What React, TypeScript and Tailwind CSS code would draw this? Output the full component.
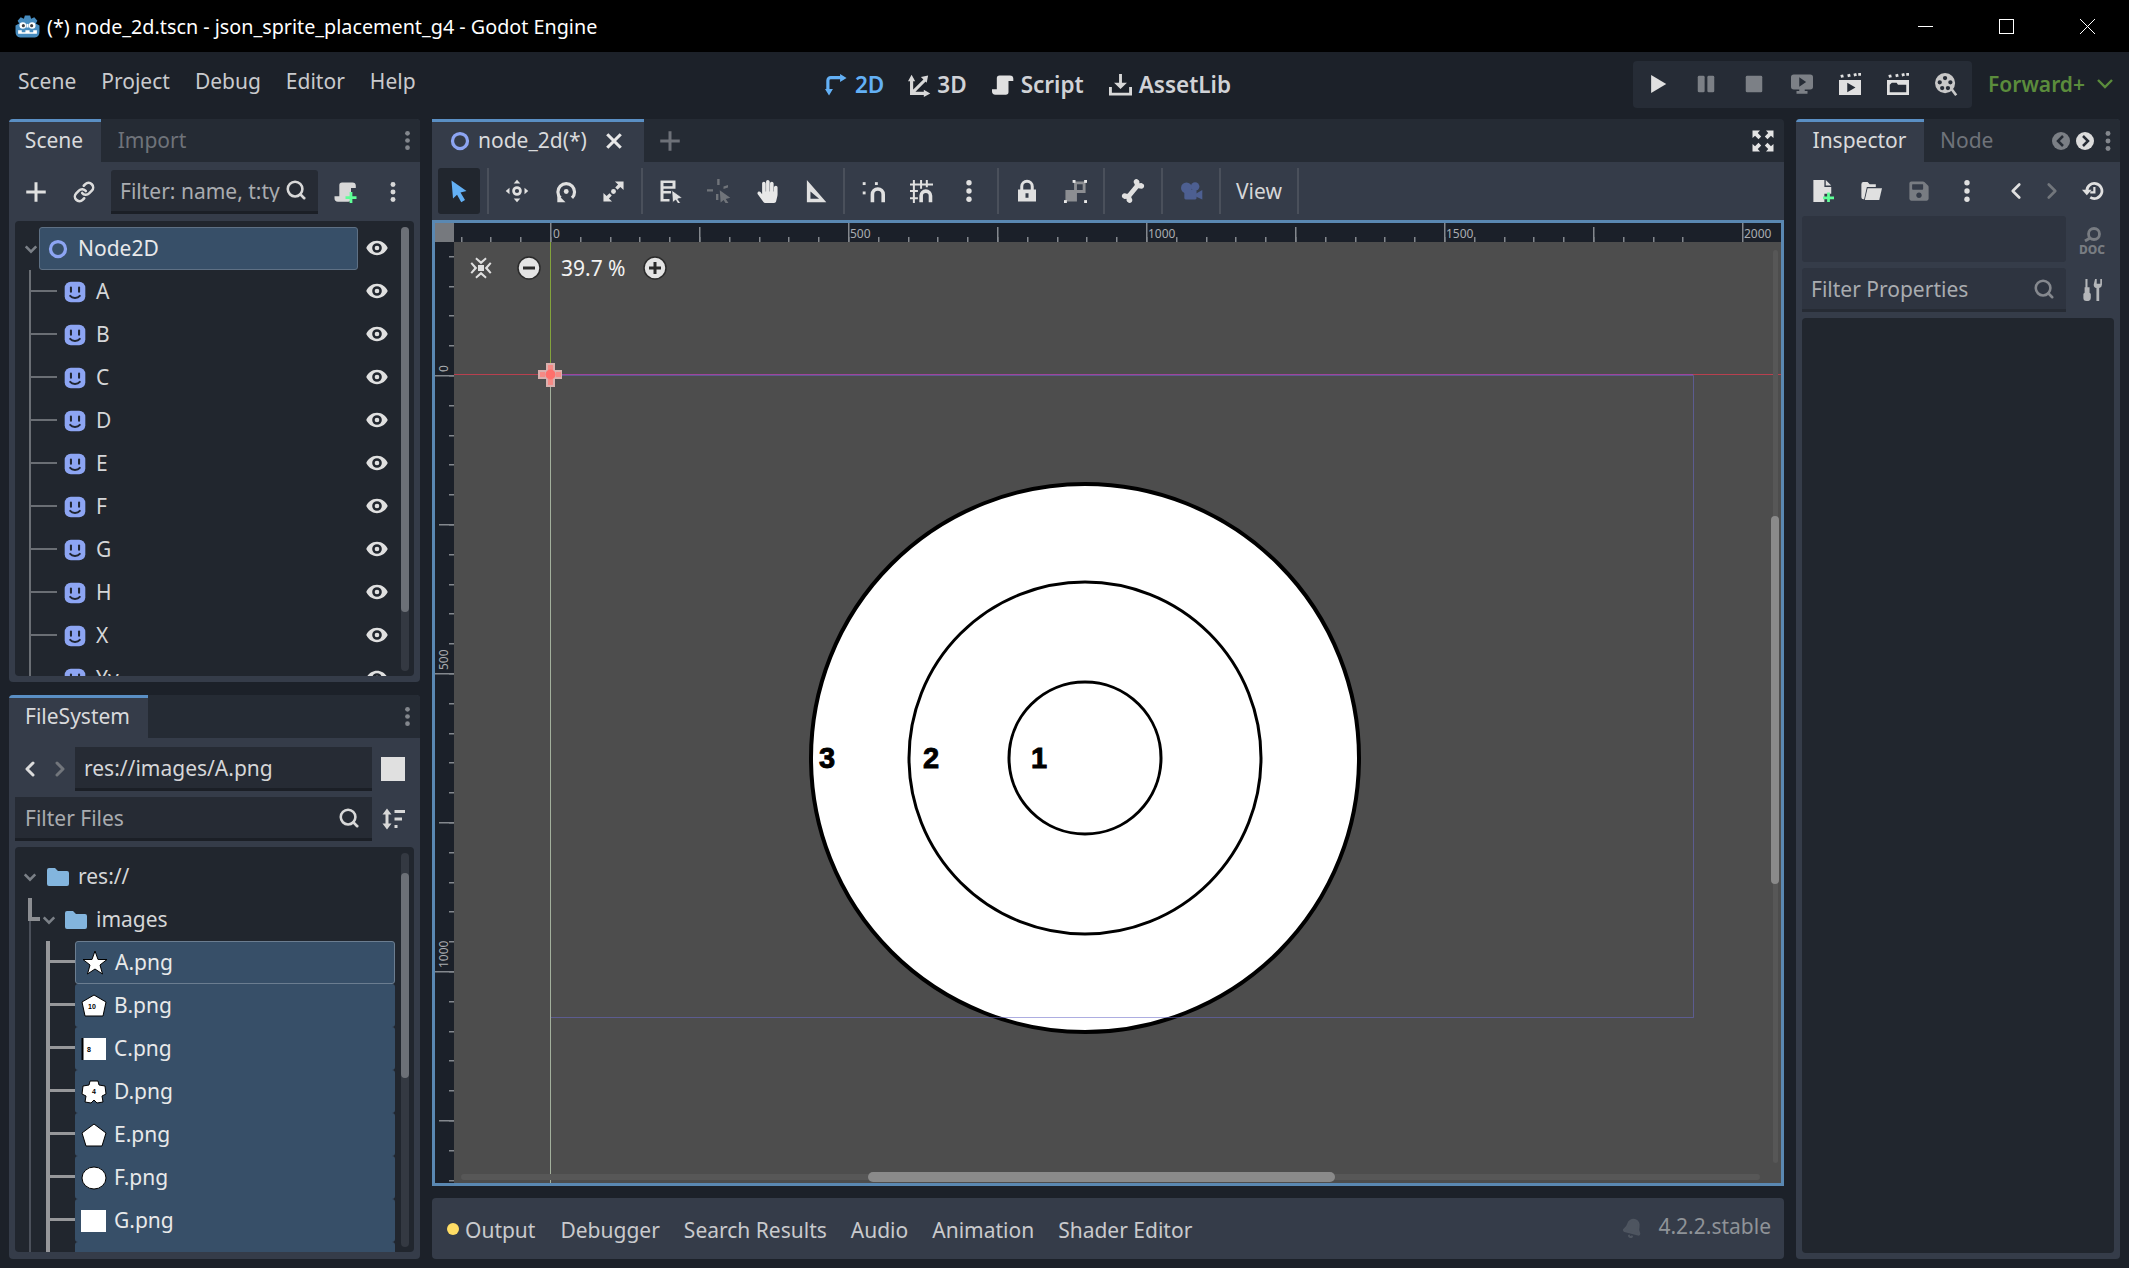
import type { ReactNode } from "react";
import { Bell, ChevronLeft, ChevronRight, Link, Search } from "lucide-react";
import { FaBone, FaHandPaper, FaSave } from "react-icons/fa";

function Ico({ size = 21, className = "text-[#e0e0e0]", children }: { size?: number; className?: string; children: ReactNode }) {
  return (
    <svg width={size} height={size} viewBox="0 0 16 16" fill="currentColor" className={"shrink-0 " + className}>
      {children}
    </svg>
  );
}

function Dots({ size = 21, className = "text-[#d8d8d8]" }: { size?: number; className?: string }) {
  return (
    <Ico size={size} className={className}>
      <circle cx="8" cy="2.5" r="1.8" />
      <circle cx="8" cy="8" r="1.8" />
      <circle cx="8" cy="13.5" r="1.8" />
    </Ico>
  );
}

function Eye() {
  return (
    <Ico size={22} className="-translate-y-[1px] text-[#e0e0e0]">
      <path
        fillRule="evenodd"
        d="M8 2.8C4.2 2.8 1.3 5.4.2 8c1.1 2.6 4 5.2 7.8 5.2s6.700-2.600 7.800-5.200C14.700 5.400 11.800 2.800 8 2.800zM8 4.500a3.500 3.500 0 1 1 0 7 3.500 3.500 0 0 1 0-7zM8 6.300a1.700 1.700 0 1 0 0 3.400 1.700 1.700 0 0 0 0-3.400z"
      />
    </Ico>
  );
}

function SpriteIcon() {
  return (
    <svg width={22} height={22} viewBox="0 0 16 16" className="shrink-0">
      <rect x="0.5" y="0.5" width="15" height="15" rx="4.500" fill="#8da5f3" />
      <rect x="4.300" y="4" width="1.500" height="4.500" rx="0.750" fill="#1f2530" />
      <rect x="10.200" y="4" width="1.500" height="4.500" rx="0.750" fill="#1f2530" />
      <path d="M4.500 10.800c1.500 2 5.500 2 7 0" fill="none" stroke="#1f2530" strokeWidth="1.400" strokeLinecap="round" />
    </svg>
  );
}

function NodeRing({ size = 20 }: { size?: number }) {
  return (
    <svg width={size} height={size} viewBox="0 0 16 16" className="shrink-0">
      <circle cx="8" cy="8" r="6" fill="none" stroke="#8da5f3" strokeWidth="2.600" />
    </svg>
  );
}

function ChevDown() {
  return (
    <svg width={14} height={14} viewBox="0 0 16 16" className="shrink-0">
      <path d="M2 5l6 6 6-6" fill="none" stroke="#7b8087" strokeWidth="3" />
    </svg>
  );
}

function Folder() {
  return (
    <svg width={23} height={20} viewBox="0 0 23 20" className="shrink-0">
      <path d="M1 3a2 2 0 0 1 2-2h6l3 3h9a2 2 0 0 1 2 2v11a2 2 0 0 1-2 2H3a2 2 0 0 1-2-2z" fill="#83b5de" />
    </svg>
  );
}

function GodotLogo() {
  return (
    <svg width={25} height={25} viewBox="0 0 24 24" className="shrink-0">
      <path
        d="M9.500 1.500L14.500 1.500L15.500 4.500L18.500 3L21.500 6.500L20 9L23.500 11L23.500 17Q23.500 22 19 22.500L5 22.500Q.5 22 .5 17L.5 11L4 9L2.500 6.500L5.500 3L8.500 4.500Z"
        fill="#478cbf"
      />
      <path d="M3 15.500h3.500v2h3.500v-2h4v2h3.500v-2H21v3.500H3z" fill="#fff" />
      <circle cx="7.500" cy="11" r="3.200" fill="#fff" />
      <circle cx="16.500" cy="11" r="3.200" fill="#fff" />
      <circle cx="8" cy="11.200" r="1.500" fill="#414042" />
      <circle cx="16" cy="11.200" r="1.500" fill="#414042" />
      <rect x="11" y="9.500" width="2" height="3.500" fill="#fff" />
    </svg>
  );
}

function ScrollIcon({ size = 21, className = "text-[#e0e0e0]" }: { size?: number; className?: string }) {
  return (
    <Ico size={size} className={className}>
      <path d="M5.500 1H13a2.500 2.500 0 0 1 2.500 2.500V5H12v8a2 2 0 0 1-2 2H2.500A2.500 2.500 0 0 1 0 12.500V11h3.500V3A2 2 0 0 1 5.500 1z" />
    </Ico>
  );
}

const sceneNodes = ["A", "B", "C", "D", "E", "F", "G", "H", "X", "Yy"];

function SceneDock() {
  return (
    <div className="flex h-[563px] flex-col overflow-hidden rounded-t-[4px] rounded-b-[4px] bg-[#353c49]">
      <div className="flex h-[43px] shrink-0 items-stretch bg-[#252b34]">
        <div className="flex w-[92px] items-center justify-center border-t-[3px] border-[#5a8fc4] bg-[#353c49] pb-[3px] pr-[2px] text-[#d9dadc]">Scene</div>
        <div className="flex w-[102px] items-center justify-center pb-[1px] text-[#6f737a]">Import</div>
        <div className="ml-auto flex items-center pr-[2px]">
          <Dots size={21} className="text-[#83878d]" />
        </div>
      </div>
      <div className="flex h-[59px] shrink-0 items-center">
        <div className="flex w-[54px] justify-start pl-[15px]">
          <svg width={24} height={24} viewBox="0 0 16 16" fill="#e0e0e0">
            <path d="M7 1.500h2V7h5.500v2H9v5.500H7V9H1.500V7H7z" />
          </svg>
        </div>
        <div className="flex w-[42px] justify-center">
          <Link size={22} strokeWidth={2.800} className="text-[#dcdcdc]" />
        </div>
        <div className="ml-[6px] flex h-[44px] w-[207px] items-center rounded-t-[3px] border-b-[3px] border-[#1b1f26] bg-[#262b34] pl-[9px] pr-[11px]">
          <span className="flex-1 translate-y-[1px] overflow-hidden whitespace-nowrap text-[#a9acb0]">Filter: name, t:ty</span>
          <Search size={22} strokeWidth={2.800} className="shrink-0 text-[#d8d8d8]" />
        </div>
        <div className="ml-[15px] flex w-[24px] justify-center">
          <svg width={23} height={22} viewBox="0 0 16 16">
            <path d="M5.500 1H13a2.500 2.500 0 0 1 2.500 2.500V5H12v8a2 2 0 0 1-2 2H2.500A2.500 2.500 0 0 1 0 12.500V11h3.500V3A2 2 0 0 1 5.500 1z" fill="#d8d8d8" />
            <path d="M11 8h2v3h3v2h-3v3h-2v-3H8v-2h3z" fill="#5fff97" />
          </svg>
        </div>
        <div className="ml-[25px]">
          <Dots size={22} />
        </div>
      </div>
      <div className="mx-[6px] flex h-[455px] shrink-0 overflow-hidden rounded-[4px] bg-[#21262e] pt-[6px]">
        <div className="w-[386px] shrink-0">
          <div className="flex h-[43px] items-center">
            <div className="flex w-[24px] justify-end pr-[1px]">
              <ChevDown />
            </div>
            <div className="flex h-[43px] w-[319px] items-center gap-[10px] rounded-[3px] border border-[#5e7084] bg-[#374f68] pl-[8px] text-[#e8e9ea]">
              <NodeRing size={20} />
              Node2D
            </div>
            <div className="ml-[8px]">
              <Eye />
            </div>
          </div>
          {sceneNodes.map((name) => (
            <div key={name} className="flex h-[43px] items-center">
              <div className="ml-[14px] h-full w-[28px] shrink-0 border-l-2 border-[#6a6e74]">
                <div className="h-[22px] border-b-2 border-[#6a6e74]" />
              </div>
              <div className="ml-[7px]">
                <SpriteIcon />
              </div>
              <div className="ml-[10px] w-[270px] text-[#d5d6d8]">{name}</div>
              <Eye />
            </div>
          ))}
        </div>
        <div className="ml-[0px] h-[444px] w-[8px] shrink-0 rounded-[4px] bg-[#343942]">
          <div className="h-[385px] rounded-[4px] bg-[#6c7077]" />
        </div>
      </div>
    </div>
  );
}

function Thumb({ children }: { children: ReactNode }) {
  return (
    <svg width={26} height={26} viewBox="0 0 26 26" className="shrink-0">
      {children}
    </svg>
  );
}

const thumbText = { fill: "#000", fontSize: 7, fontWeight: 700, fontFamily: "'Liberation Sans',sans-serif", textAnchor: "middle" as const };

const files: { name: string; thumb: ReactNode }[] = [
  {
    name: "A.png",
    thumb: (
      <Thumb>
        <polygon points="13,1 16,9.500 25,9.500 18,15 20.500,24 13,19 5.500,24 8,15 1,9.500 10,9.500" fill="#fff" stroke="#000" />
      </Thumb>
    ),
  },
  {
    name: "B.png",
    thumb: (
      <Thumb>
        <polygon points="13,2 25,9 22,23 4,23 1,9" fill="#fff" stroke="#000" />
        <text x="11" y="16" {...thumbText}>10</text>
      </Thumb>
    ),
  },
  {
    name: "C.png",
    thumb: (
      <Thumb>
        <rect x="1" y="2" width="24" height="22" fill="#fff" />
        <rect x="0.500" y="2" width="2" height="22" fill="#000" />
        <text x="8" y="16" {...thumbText}>8</text>
      </Thumb>
    ),
  },
  {
    name: "D.png",
    thumb: (
      <Thumb>
        <path d="M9 2h8l1 4 6 1 1 8-4 2 1 6-6 1-3-3-3 3-6-1 1-6-4-2 1-8 6-1z" fill="#fff" stroke="#000" />
        <text x="13" y="15" {...thumbText}>4</text>
      </Thumb>
    ),
  },
  {
    name: "E.png",
    thumb: (
      <Thumb>
        <polygon points="13,2 25,11 21,24 5,24 1,11" fill="#fff" stroke="#000" />
      </Thumb>
    ),
  },
  {
    name: "F.png",
    thumb: (
      <Thumb>
        <ellipse cx="13" cy="13" rx="12" ry="11" fill="#fff" stroke="#000" />
      </Thumb>
    ),
  },
  {
    name: "G.png",
    thumb: (
      <Thumb>
        <rect x="0" y="2" width="25" height="22" fill="#fff" />
      </Thumb>
    ),
  },
  {
    name: "H.png",
    thumb: (
      <Thumb>
        <polygon points="13,2 25,24 1,24" fill="#fff" stroke="#000" />
      </Thumb>
    ),
  },
];

function FileSystemDock() {
  return (
    <div className="flex h-[564px] flex-col overflow-hidden rounded-[4px] bg-[#353c49]">
      <div className="flex h-[43px] shrink-0 items-stretch bg-[#252b34]">
        <div className="flex w-[139px] items-center justify-center border-t-[3px] border-[#5a8fc4] bg-[#353c49] pb-[3px] pr-[2px] text-[#d9dadc]">FileSystem</div>
        <div className="ml-auto flex items-center pr-[2px]">
          <Dots size={21} className="text-[#83878d]" />
        </div>
      </div>
      <div className="mt-[9px] flex h-[44px] shrink-0 items-center">
        <div className="flex w-[66px] shrink-0 items-center pl-[9px]">
          <ChevronLeft size={24} strokeWidth={3} className="text-[#dcdcdc]" />
          <ChevronRight size={24} strokeWidth={3} className="ml-[6px] text-[#72767c]" />
        </div>
        <div className="flex h-[44px] w-[297px] items-center border-b-[3px] border-[#1b1f26] bg-[#262b34] pl-[9px] pt-[1px] text-[#d5d6d8]">res://images/A.png</div>
        <div className="ml-[9px] h-[24px] w-[24px] bg-[#e0e0e0]" />
      </div>
      <div className="mt-[6px] flex h-[44px] shrink-0 items-center pl-[6px]">
        <div className="flex h-[44px] w-[357px] items-center border-b-[3px] border-[#1b1f26] bg-[#262b34] pl-[10px] pr-[12px]">
          <span className="flex-1 translate-y-[1px] text-[#a9acb0]">Filter Files</span>
          <Search size={22} strokeWidth={2.800} className="text-[#d8d8d8]" />
        </div>
        <div className="ml-[9px]">
          <svg width={24} height={24} viewBox="0 0 16 16" fill="#d8d8d8">
            <path d="M4 1l3 4H5v6h2l-3 4-3-4h2V5H1z" />
            <rect x="9" y="2" width="7" height="2" />
            <rect x="9" y="7" width="5" height="2" />
            <rect x="9" y="12" width="2" height="2" />
          </svg>
        </div>
      </div>
      <div className="mx-[6px] mt-[6px] flex h-[405px] shrink-0 overflow-hidden rounded-[4px] bg-[#21262e] pt-[8px]">
        <div className="w-[386px] shrink-0">
          <div className="flex h-[43px] items-center pl-[8px] text-[#d5d6d8]">
            <ChevDown />
            <div className="ml-[9px]">
              <Folder />
            </div>
            <span className="ml-[9px]">res://</span>
          </div>
          <div className="flex h-[43px] items-center text-[#d5d6d8]">
            <div className="ml-[13px] h-[43px] w-[12px] shrink-0">
              <div className="h-[23px] border-b-4 border-l-4 border-[#8c8e92]" />
              <div className="ml-[1px] h-[20px] w-[2px] bg-[#4b505a]" />
            </div>
            <div className="ml-[2px]">
              <ChevDown />
            </div>
            <div className="ml-[8px]">
              <Folder />
            </div>
            <span className="ml-[9px]">images</span>
          </div>
          {files.map((f, i) => (
            <div key={f.name} className="flex h-[43px]">
              <div className="ml-[14px] h-full w-[2px] shrink-0 bg-[#4b505a]" />
              <div className="ml-[15px] h-full w-[29px] shrink-0 border-l-4 border-[#96979a]">
                <div className="h-[22px] border-b-[3px] border-[#96979a]" />
              </div>
              <div
                className={
                  "flex h-[43px] w-[320px] items-center gap-[7px] rounded-[3px] bg-[#374f68] pl-[6px] text-[#e8e9ea]" +
                  (i === 0 ? " border border-[#6b7d90]" : "")
                }
              >
                {f.thumb}
                {f.name}
              </div>
            </div>
          ))}
        </div>
        <div className="ml-[0px] h-[394px] w-[8px] shrink-0 -translate-y-[2px] rounded-[4px] bg-[#343942] pt-[20px]">
          <div className="h-[205px] rounded-[4px] bg-[#6c7077]" />
        </div>
      </div>
    </div>
  );
}

function ToolBtn({ children, active }: { children: ReactNode; active?: boolean }) {
  return (
    <div className="flex h-[46px] w-[48px] shrink-0 items-center justify-center">
      {active ? (
        <div className="flex h-[46px] w-[42px] items-center justify-center rounded-[3px] bg-[#21262e]">{children}</div>
      ) : (
        children
      )}
    </div>
  );
}

function Sep() {
  return <div className="mx-[4px] h-[46px] w-[2px] shrink-0 bg-[#4a505b]" />;
}

const cursorPath = "M8.500 7.500l7 5-3 .8 1.800 2.700-1.500.8-1.700-2.800-2 1.700z";

function ViewportToolbar() {
  return (
    <div className="flex h-[58px] shrink-0 items-start bg-[#353c49] pl-[3px] pt-[6px]">
      <ToolBtn active>
        <Ico size={24} className="text-[#63b0f5]">
          <path d="M3 1l10 7-4 1 3 5-2.500 1.500-2.800-5L4 13z" />
        </Ico>
      </ToolBtn>
      <Sep />
      <ToolBtn>
        <Ico size={24}>
          <path d="M8 .5l2.200 2.500H5.800zM8 15.500L5.800 13h4.400zM.5 8L3 5.800v4.400zM15.500 8L13 10.200V5.800z" />
          <circle cx="8" cy="8" r="2.300" fill="none" stroke="currentColor" strokeWidth="1.800" />
        </Ico>
      </ToolBtn>
      <ToolBtn>
        <Ico size={23}>
          <path d="M4.500 12.500A5.800 5.800 0 1 1 12.500 12.500" fill="none" stroke="currentColor" strokeWidth="2.200" />
          <path d="M2.300 15.500V9.800l5.700 5.700z" />
          <circle cx="8.500" cy="8" r="1.700" />
        </Ico>
      </ToolBtn>
      <ToolBtn>
        <Ico size={23}>
          <path d="M9 1h6v6l-2.200-2.200-2 2-1.600-1.600 2-2zM7 15H1V9l2.200 2.200 2-2 1.600 1.600-2 2z" />
          <circle cx="8" cy="8" r="1.700" />
        </Ico>
      </ToolBtn>
      <Sep />
      <ToolBtn>
        <Ico size={24}>
          <path d="M1 1h10v5.500H3V8h5v1.700H3v3.600h4V15H1zM3 2.700v2.100h6V2.700z" fillRule="evenodd" />
          <path d={cursorPath} stroke="#353c49" strokeWidth="0.500" />
        </Ico>
      </ToolBtn>
      <ToolBtn>
        <Ico size={24} className="text-[#70747a]">
          <path d="M6.800 0h1.600v4H6.800zM0 6.800h4v1.600H0zM11 5l3-1v1.600l-3 1zM6 10h1.600v4H6z" />
          <path d={cursorPath} />
        </Ico>
      </ToolBtn>
      <ToolBtn>
        <FaHandPaper size={23} className="text-[#e8e8e8]" />
      </ToolBtn>
      <ToolBtn>
        <Ico size={23}>
          <path fillRule="evenodd" d="M2 0l13.500 15.500H2zM4.500 8v5h6z" />
        </Ico>
      </ToolBtn>
      <Sep />
      <ToolBtn>
        <Ico size={23}>
          <path d="M6 15.500V10a5 5 0 0 1 10 0v5.500h-2.500V10a2.500 2.500 0 0 0-5 0v5.500z" />
          <rect x="0.500" y="1.500" width="2" height="2" />
          <rect x="0.500" y="8" width="2" height="2" />
          <rect x="9" y="1.500" width="2" height="2" />
        </Ico>
      </ToolBtn>
      <ToolBtn>
        <Ico size={23}>
          <path d="M2 0h1.400v16H2zM7 0h1.400v6H7zM11 0h1.400v5H11zM0 2.500h16v1.400H0zM0 7h5.500v1.400H0zM0 12h5.500v1.400H0z" />
          <path d="M6.500 15.500V11a4.500 4.500 0 0 1 9 0v4.500h-2.500V11a2 2 0 0 0-4 0v4.500z" />
        </Ico>
      </ToolBtn>
      <ToolBtn>
        <Dots size={24} className="text-[#e0e0e0]" />
      </ToolBtn>
      <Sep />
      <ToolBtn>
        <Ico size={24}>
          <path d="M4.500 7.500V5a3.500 3.500 0 0 1 7 0v2.500" fill="none" stroke="currentColor" strokeWidth="2" />
          <path fillRule="evenodd" d="M2 7h12v8H2zM7 9.500v3h2v-3z" />
        </Ico>
      </ToolBtn>
      <ToolBtn>
        <Ico size={23} className="text-[#8c8e92]">
          <path fillRule="evenodd" d="M7 1h8v8H9v6H1V7h6zM9 3v4h4V3z" />
          <rect x="0" y="0" width="2" height="2" fill="#e8e8e8" transform="translate(6 0)" />
          <rect x="14" y="0" width="2" height="2" fill="#e8e8e8" />
          <rect x="0" y="14" width="2" height="2" fill="#e8e8e8" />
          <rect x="14" y="14" width="2" height="2" fill="#e8e8e8" />
        </Ico>
      </ToolBtn>
      <Sep />
      <ToolBtn>
        <FaBone size={24} className="-rotate-[50deg] text-[#e0e0e0]" />
      </ToolBtn>
      <Sep />
      <ToolBtn>
        <Ico size={23} className="text-[#4d5f91]">
          <circle cx="4.500" cy="5.500" r="3.800" />
          <circle cx="10.500" cy="4.500" r="3" />
          <rect x="3" y="7" width="8.500" height="6.500" rx="1" />
          <path d="M11 9.500l4.500-2.500v6.500L11 11.500z" />
        </Ico>
      </ToolBtn>
      <Sep />
      <div className="flex h-[46px] w-[68px] shrink-0 items-center justify-center text-[#d5d6d8]">View</div>
      <Sep />
    </div>
  );
}

const P = 298;
const ticksX = Array.from({ length: 42 }, (_, i) => 550 + ((i - 3) * P) / 10).filter((x) => x > 455 && x < 1781);
const ticksY = Array.from({ length: 34 }, (_, i) => 375 + ((i - 4) * P) / 10).filter((y) => y > 243 && y < 1183);

function Canvas() {
  return (
    <svg width={1346} height={960} viewBox="435 223 1346 960" className="block">
      <rect x="435" y="223" width="1346" height="960" fill="#4d4d4d" />
      <circle cx="1085" cy="758" r="274" fill="#fff" stroke="#000" strokeWidth="4" />
      <circle cx="1085" cy="758" r="176" fill="none" stroke="#000" strokeWidth="3" />
      <circle cx="1085" cy="758" r="76" fill="none" stroke="#000" strokeWidth="3" />
      <g fontFamily="'Liberation Sans',sans-serif" fontWeight="700" fontSize="29" fill="#000" stroke="#000" strokeWidth="0.900" textAnchor="middle">
        <text x="827" y="768">3</text>
        <text x="931" y="768">2</text>
        <text x="1039" y="768">1</text>
      </g>
      <path d="M550.500 375.500H1693.500V1017.500H550.500z" fill="none" stroke="#6a6ac8" strokeOpacity="0.550" strokeWidth="1" />
      <path d="M454 374.500H550" stroke="#b8404f" strokeWidth="1" />
      <path d="M550 374.500H1693" stroke="#a0449a" strokeWidth="1" />
      <path d="M1693 374.500H1781" stroke="#b8404f" strokeWidth="1" />
      <path d="M550.500 242V374" stroke="#83a33c" strokeWidth="1" />
      <path d="M550.500 374V1183" stroke="#a3b09c" strokeWidth="1" />
      <path d="M546 363h9v7h7v9h-7v8h-9v-8h-8v-9h8z" fill="#d9b0ae" />
      <path d="M548 365h5v5h-5zM548 379h5v6h-5zM540 372h5v5h-5zM556 372h5v5h-5z" fill="#f58a85" />
      <circle cx="550.500" cy="374.500" r="5" fill="#ff6f6b" />

      <rect x="454" y="223" width="1327" height="19" fill="#1b2029" />
      <rect x="435" y="242" width="19" height="941" fill="#1b2029" />
      <rect x="435" y="223" width="19" height="19" fill="#76797e" />
      {ticksX.map((x) => (
        <rect key={x} x={Math.round(x)} y="237" width="1.500" height="5" fill="#83878d" />
      ))}
      {[550, 848, 1146, 1444, 1742].map((x) => (
        <rect key={x} x={x} y="223" width="1.500" height="19" fill="#83878d" />
      ))}
      {[699, 997, 1295, 1593].map((x) => (
        <rect key={x} x={x} y="227" width="1.500" height="15" fill="#83878d" />
      ))}
      {ticksY.map((y) => (
        <rect key={y} x="449" y={Math.round(y)} width="5" height="1.500" fill="#83878d" />
      ))}
      {[375, 673, 971].map((y) => (
        <rect key={y} x="435" y={y} width="19" height="1.500" fill="#83878d" />
      ))}
      {[524, 822, 1120].map((y) => (
        <rect key={y} x="439" y={y} width="15" height="1.500" fill="#83878d" />
      ))}
      <g fontFamily="'Noto Sans',sans-serif" fontSize="12" fill="#a9acb0">
        <text x="553" y="238">0</text>
        <text x="850" y="238">500</text>
        <text x="1148" y="238">1000</text>
        <text x="1446" y="238">1500</text>
        <text x="1744" y="238">2000</text>
        <text transform="translate(448 372) rotate(-90)">0</text>
        <text transform="translate(448 670) rotate(-90)">500</text>
        <text transform="translate(448 968) rotate(-90)">1000</text>
      </g>
    </svg>
  );
}

function ZoomOverlay() {
  return (
    <div className="absolute left-[34px] top-[29px] flex h-[32px] items-center text-[#f2f2f2]">
      <svg width={24} height={24} viewBox="0 0 16 16" fill="#e0e0e0">
        <rect x="6" y="6" width="4" height="4" />
        <path d="M5 1l3 2.500L11 1l.8 1L8 5.500 4.200 2zM5 15l3-2.500 3 2.500.8-1L8 10.500 4.200 14zM1 5l2.500 3L1 11l1 .8L5.500 8 2 4.200zM15 5l-2.500 3 2.500 3-1 .8L10.500 8 14 4.200z" />
      </svg>
      <svg width={24} height={24} viewBox="0 0 24 24" className="ml-[24px]">
        <circle cx="12" cy="12" r="11" fill="#e4e4e4" stroke="#2b2b2b" strokeWidth="1.500" />
        <rect x="6" y="10.500" width="12" height="3" fill="#2b2b2b" />
      </svg>
      <span className="ml-[20px] w-[82px] text-[21px]">39.7 %</span>
      <svg width={24} height={24} viewBox="0 0 24 24">
        <circle cx="12" cy="12" r="11" fill="#e4e4e4" stroke="#2b2b2b" strokeWidth="1.500" />
        <path d="M6 10.500h4.500V6h3v4.500H18v3h-4.500V18h-3v-4.500H6z" fill="#2b2b2b" />
      </svg>
    </div>
  );
}

function CenterColumn() {
  return (
    <div className="flex w-[1352px] shrink-0 flex-col">
      <div className="flex h-[43px] shrink-0 items-stretch rounded-t-[4px] bg-[#252b34]">
        <div className="flex w-[212px] items-center border-t-[3px] border-[#5a8fc4] bg-[#353c49] pb-[3px] pl-[18px] text-[#d9dadc]">
          <NodeRing size={20} />
          <span className="ml-[8px]">node_2d(*)</span>
          <svg width={18} height={18} viewBox="0 0 16 16" className="ml-[18px]">
            <path d="M2 2l12 12M14 2L2 14" stroke="#e8e8e8" strokeWidth="2.800" />
          </svg>
        </div>
        <div className="ml-[14px] flex items-center">
          <svg width={24} height={24} viewBox="0 0 16 16" fill="#6d7178">
            <path d="M7 1.500h2V7h5.500v2H9v5.500H7V9H1.500V7H7z" />
          </svg>
        </div>
        <div className="ml-auto flex items-center pr-[9px]">
          <svg width={24} height={24} viewBox="0 0 16 16" fill="#e4e4e4">
            <path d="M1 1h5L4.500 2.700 6.800 5 5 6.800 2.700 4.500 1 6zM15 1v5l-1.700-1.500L11 6.800 9.200 5l2.300-2.300L10 1zM1 15v-5l1.700 1.500L5 9.200 6.800 11l-2.300 2.300L6 15zM15 15h-5l1.500-1.700L9.200 11 11 9.200l2.300 2.300L15 10z" />
          </svg>
        </div>
      </div>
      <ViewportToolbar />
      <div className="relative h-[966px] shrink-0 overflow-hidden border-[3px] border-[#5a88b2]">
        <Canvas />
        <ZoomOverlay />
        <div className="absolute left-[1338px] top-[27px] h-[913px] w-[5px] rounded-[3px] bg-[#575757]">
          <div className="ml-[-2px] mt-[266px] h-[368px] w-[8px] rounded-[4px] bg-[#8a8a8a]" />
        </div>
        <div className="absolute left-[26px] top-[951px] h-[6px] w-[1299px] rounded-[3px] bg-[#575757]">
          <div className="ml-[407px] mt-[-2px] h-[10px] w-[467px] rounded-[5px] bg-[#8a8a8a]" />
        </div>
      </div>
      <div className="mt-[12px] flex h-[61px] shrink-0 items-center rounded-[4px] bg-[#353c49] pl-[15px] pr-[13px] text-[#c9cacd]">
        <div className="h-[12px] w-[12px] rounded-full bg-[#ffdd65]" />
        <span className="ml-[6px] translate-y-[2px]">Output</span>
        <span className="ml-[25px] translate-y-[2px]">Debugger</span>
        <span className="ml-[24px] translate-y-[2px]">Search Results</span>
        <span className="ml-[24px] translate-y-[2px]">Audio</span>
        <span className="ml-[24px] translate-y-[2px]">Animation</span>
        <span className="ml-[24px] translate-y-[2px]">Shader Editor</span>
        <div className="ml-auto mr-[15px]">
          <Bell size={21} strokeWidth={2.500} className="rotate-[15deg] fill-[#4e5560] text-[#4e5560]" />
        </div>
        <span className="-translate-y-[2px] text-[#8f9398]">4.2.2.stable</span>
      </div>
    </div>
  );
}

function RightDock() {
  return (
    <div className="flex h-[1140px] w-[324px] shrink-0 flex-col overflow-hidden rounded-[4px] bg-[#353c49]">
      <div className="flex h-[43px] shrink-0 items-stretch bg-[#252b34]">
        <div className="flex w-[128px] items-center justify-center border-t-[3px] border-[#5a8fc4] bg-[#353c49] pb-[3px] pr-[1px] text-[#d9dadc]">Inspector</div>
        <div className="ml-[16px] flex items-center pb-[1px] text-[#6f737a]">Node</div>
        <div className="ml-auto flex items-center gap-[6px] pr-[1px]">
          <svg width={18} height={18} viewBox="0 0 18 18">
            <circle cx="9" cy="9" r="9" fill="#7b7f85" />
            <path d="M11 4l-5 5 5 5" fill="none" stroke="#252b34" strokeWidth="2.500" />
          </svg>
          <svg width={18} height={18} viewBox="0 0 18 18">
            <circle cx="9" cy="9" r="9" fill="#dcdcdc" />
            <path d="M7 4l5 5-5 5" fill="none" stroke="#252b34" strokeWidth="2.500" />
          </svg>
          <div className="-ml-[3px]">
            <Dots size={22} className="text-[#83878d]" />
          </div>
        </div>
      </div>
      <div className="flex h-[54px] shrink-0 items-center pl-[16px] pt-[4px]">
        <div className="w-[48px]">
          <svg width={22} height={22} viewBox="0 0 16 16">
            <path d="M1 0h8v5h5v5H9v6H1z" fill="#e0e0e0" />
            <path d="M10 0l4 4h-4z" fill="#e0e0e0" />
            <path d="M11 9h2v3h3v2h-3v2h-2v-2H8v-2h3z" fill="#5fff97" />
          </svg>
        </div>
        <div className="w-[48px]">
          <svg width={22} height={22} viewBox="0 0 16 16" fill="#e0e0e0">
            <path d="M1 3a1.500 1.500 0 0 1 1.500-1.500h3l1.500 1.500h4.500V5H5L3 14H2.500A1.500 1.500 0 0 1 1 12.500z" />
            <path d="M5.500 6H16l-2 8.500H3.500z" />
          </svg>
        </div>
        <div className="w-[47px]">
          <FaSave size={22} className="text-[#787c82]" />
        </div>
        <div className="w-[48px]">
          <Dots size={24} className="text-[#e0e0e0]" />
        </div>
        <div className="w-[36px]">
          <ChevronLeft size={26} strokeWidth={2.500} className="text-[#e0e0e0]" />
        </div>
        <div className="w-[43px]">
          <ChevronRight size={26} strokeWidth={2.500} className="text-[#72767c]" />
        </div>
        <svg width={22} height={22} viewBox="0 0 16 16" fill="none">
          <path d="M3.500 8A5.500 5.500 0 1 1 6 12.600" stroke="#e0e0e0" strokeWidth="2" />
          <path d="M0 7h7l-3.500 4z" fill="#e0e0e0" />
          <path d="M9 5v4H6" stroke="#e0e0e0" strokeWidth="1.600" />
        </svg>
      </div>
      <div className="flex h-[46px] shrink-0 items-center pl-[6px]">
        <div className="h-[46px] w-[264px] rounded-[3px] bg-[#2e3440]" />
        <svg width={30} height={30} viewBox="0 0 30 30" className="ml-[11px] translate-y-[2px]">
          <circle cx="17" cy="8" r="5.500" fill="none" stroke="#787c82" strokeWidth="2.800" />
          <path d="M13 12l-5 3" stroke="#787c82" strokeWidth="2.800" />
          <text x="15" y="28" textAnchor="middle" fontSize="12" fontWeight="800" fontFamily="'Noto Sans',sans-serif" fill="#787c82">DOC</text>
        </svg>
      </div>
      <div className="mt-[6px] flex h-[44px] shrink-0 items-center pl-[6px]">
        <div className="flex h-[44px] w-[264px] items-center rounded-t-[3px] border-b-[3px] border-[#262b34] bg-[#2e3440] pl-[9px] pr-[11px] pt-[1px]">
          <span className="flex-1 text-[#a9acb0]">Filter Properties</span>
          <Search size={22} strokeWidth={2.800} className="text-[#85888e]" />
        </div>
        <svg width={22} height={22} viewBox="0 0 16 16" fill="#b4b6b9" className="ml-[16px]">
          <path d="M2.500 0h1.500v6h1.500v4c.7.4.9.8.9 1.400v2.400A2.200 2.200 0 0 1 4.700 16H3.200A2.200 2.200 0 0 1 1 13.800v-2.400c0-.6.2-1 .9-1.400V6h.6z" />
          <path d="M9.500 0h1.200v3.500h2.600V0h1.200v4.200a2.500 2.500 0 0 1-2 2.400V16h-2V6.600a2.500 2.500 0 0 1-2-2.400z" />
        </svg>
      </div>
      <div className="mx-[6px] mt-[6px] h-[935px] shrink-0 rounded-[4px] bg-[#21262e]" />
    </div>
  );
}

function PlayBar() {
  const Slot = ({ children }: { children: ReactNode }) => (
    <div className="flex w-[48px] shrink-0 items-center justify-center">{children}</div>
  );
  return (
    <div className="flex h-[47px] w-[339px] items-center rounded-[4px] bg-[#262c36] pl-[1px]">
      <Slot>
        <Ico size={22}>
          <path d="M3 1.500l11 6.500-11 6.500z" />
        </Ico>
      </Slot>
      <Slot>
        <Ico size={22} className="text-[#7c8086]">
          <rect x="2" y="2" width="5" height="12" rx="1" />
          <rect x="9" y="2" width="5" height="12" rx="1" />
        </Ico>
      </Slot>
      <Slot>
        <Ico size={22} className="text-[#7c8086]">
          <rect x="2" y="2" width="12" height="12" rx="1" />
        </Ico>
      </Slot>
      <Slot>
        <Ico size={22} className="text-[#7c8086]">
          <path fillRule="evenodd" d="M2 1h12a2 2 0 0 1 2 2v7a2 2 0 0 1-2 2h-4v1h2v2H4v-2h2v-1H2a2 2 0 0 1-2-2V3a2 2 0 0 1 2-2zM6 3v7l5-3.500z" />
        </Ico>
      </Slot>
      <Slot>
        <Ico size={22}>
          <path fillRule="evenodd" d="M0 5h16v11H0zM6 7v7l6-3.500z" />
          <path d="M1 1.500l2-.5.500 2-2 .5zM6 1l2-.5.500 2-2 .5zM10.500.500l2-.5.500 2-2 .5zM14 0h2v2h-2z" />
        </Ico>
      </Slot>
      <Slot>
        <Ico size={22}>
          <path fillRule="evenodd" d="M0 5h16v11H0zM2 8.500V14h12V8.500H8L7 7H3.500z" />
          <path d="M1 1.500l2-.5.500 2-2 .5zM6 1l2-.5.500 2-2 .5zM10.500.500l2-.5.500 2-2 .5zM14 0h2v2h-2z" />
        </Ico>
      </Slot>
      <Slot>
        <Ico size={23} className="text-[#c8c8c8]">
          <path
            fillRule="evenodd"
            d="M7 0a7 7 0 1 1 0 14A7 7 0 0 1 7 0zM7 2a1.500 1.500 0 1 0 0 3 1.500 1.500 0 0 0 0-3zM3.300 5a1.500 1.500 0 1 0 0 3 1.500 1.500 0 0 0 0-3zM10.700 5a1.500 1.500 0 1 0 0 3 1.500 1.500 0 0 0 0-3zM5 9a1.500 1.500 0 1 0 0 3 1.500 1.500 0 0 0 0-3zM9 9a1.500 1.500 0 1 0 0 3 1.500 1.500 0 0 0 0-3z"
          />
          <path d="M11 12l1.500-1 3 4-1.500 1z" />
        </Ico>
      </Slot>
    </div>
  );
}

export default function App() {
  return (
    <div className="h-[1268px] w-[2129px] overflow-hidden bg-[#1c2129] text-[21px] leading-none [font-family:'Noto_Sans',sans-serif]">
      <div className="flex h-[52px] items-center bg-black pl-[15px] text-[19.75px] text-white">
        <GodotLogo />
        <span className="ml-[7px] translate-y-[1px]">(*) node_2d.tscn - json_sprite_placement_g4 - Godot Engine</span>
        <div className="ml-auto flex items-center pr-[34px]">
          <div className="h-[1px] w-[15px] bg-white" />
          <div className="ml-[66px] h-[15px] w-[15px] border border-white" />
          <svg width={15} height={15} viewBox="0 0 15 15" className="ml-[66px]">
            <path d="M0 0l15 15M15 0L0 15" stroke="#fff" strokeWidth="1" />
          </svg>
        </div>
      </div>
      <div className="flex h-[67px] items-center">
        <div className="flex w-[825px] shrink-0 gap-[25px] pb-[8px] pl-[18px] text-[#c9cacd]">
          <span>Scene</span>
          <span>Project</span>
          <span>Debug</span>
          <span>Editor</span>
          <span>Help</span>
        </div>
        <div className="flex items-center pb-[1px] text-[22.5px] font-semibold text-[#d0d2d6]">
          <Ico size={23} className="text-[#63b0f5]">
            <path d="M2 11V4.500A2 2 0 0 1 4 2.500h7" fill="none" stroke="currentColor" strokeWidth="2.200" />
            <path d="M0 10.500h5.500L2.800 15zM10.500 0L15 2.800 10.500 5.500z" />
          </Ico>
          <span className="ml-[7px] text-[#63b0f5]">2D</span>
          <Ico size={23} className="ml-[24px] text-[#d8d8d8]">
            <path d="M2.500 3v10.500H12M2.500 13.500L12 4" fill="none" stroke="currentColor" strokeWidth="2.200" />
            <path d="M0 5l2.500-4.500L5 5zM11 11l4.500 2.500L11 16zM9 2l5-1-1 5z" />
          </Ico>
          <span className="ml-[6px]">3D</span>
          <div className="ml-[25px]">
            <ScrollIcon size={22} />
          </div>
          <span className="ml-[7px]">Script</span>
          <Ico size={23} className="ml-[25px] text-[#d8d8d8]">
            <path d="M7 0h2v6h3.500L8 10.500 3.500 6H7z" />
            <path d="M0 9h2v4h12V9h2v6H0z" />
          </Ico>
          <span className="ml-[7px]">AssetLib</span>
        </div>
        <div className="ml-auto flex items-center pb-[3px]">
          <PlayBar />
          <span className="ml-[16px] font-semibold text-[#5b8c3c]">Forward+</span>
          <svg width={16} height={12} viewBox="0 0 16 12" className="ml-[12px] mr-[16px]">
            <path d="M1 2l7 7 7-7" fill="none" stroke="#5b8c3c" strokeWidth="2.400" />
          </svg>
        </div>
      </div>
      <div className="flex h-[1140px] gap-[12px] pl-[9px]">
        <div className="flex w-[411px] shrink-0 flex-col gap-[13px]">
          <SceneDock />
          <FileSystemDock />
        </div>
        <CenterColumn />
        <RightDock />
      </div>
    </div>
  );
}
